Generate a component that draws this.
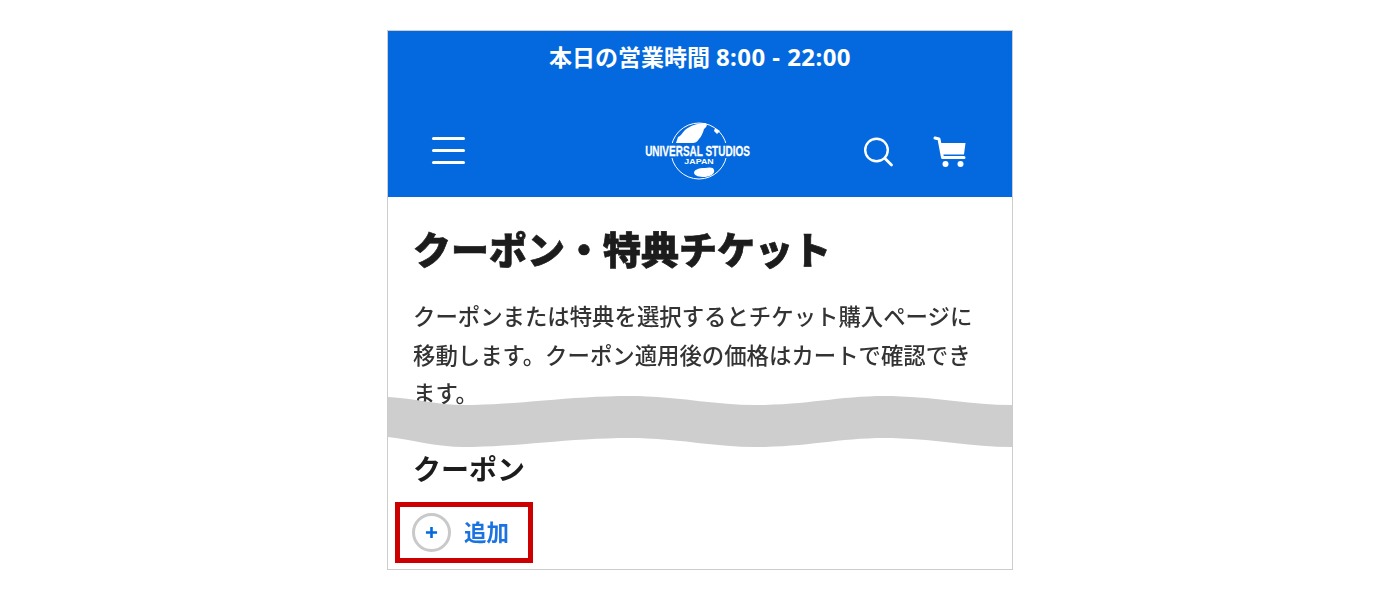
<script>
  const waveTop = "M0 1C25 2 50 9 75 9C130 9 180 0 242 0C290 0 325 9 367 9C420 9 450 0 497 0C545 0 580 9 625 9";
  const waveBottom = "L625 51C580 51 545 42 497 42C450 42 420 51 367 51C325 51 290 42 242 42C180 42 130 51 75 51C50 51 25 44 0 41Z";
</script>

<div class="frame">
  <header class="header">
    <div class="hours">本日の営業時間 <span class="time">8:00 - 22:00</span></div>
    <nav class="nav">
      <button class="menu" aria-label="メニュー"><span></span><span></span><span></span></button>
      <svg class="logo" viewBox="0 0 110 62" aria-label="Universal Studios Japan">
        <circle cx="54" cy="31" r="28" fill="none" stroke="#fff" stroke-width="1"/>
        <path d="M31 23L33 17C36 16 37 13 40 10C45 6 52 3 60 3C63 4 62 7 59 9C58 13 56 17 54 19C52 22 50 23 48 23Z" fill="#fff"/>
        <path d="M70 8L75 11L72 14L69 11Z" fill="#fff"/>
        <path d="M49 53C49 50 53 48 60 48C64 47 69 47 69 50C70 53 67 56 60 57C54 57 50 56 49 53Z" fill="#fff"/>
        <rect x="0" y="23" width="108" height="15" fill="#0469de"/>
        <text class="logo-main" transform="translate(52.5 36) scale(0.69 1)" text-anchor="middle">UNIVERSAL STUDIOS</text>
        <text class="logo-sub" transform="translate(54 43.5) scale(1.36 1)" text-anchor="middle">JAPAN</text>
      </svg>
      <div class="actions">
        <svg class="search" viewBox="0 0 31 33" aria-label="検索">
          <circle cx="12.5" cy="16" r="11.3" fill="none" stroke="#fff" stroke-width="2.4"/>
          <path d="M21 24.5L27.5 31" stroke="#fff" stroke-width="2.8" stroke-linecap="round"/>
        </svg>
        <svg class="cart" viewBox="0 0 34 34" aria-label="カート">
          <path d="M2 4L6 5L9.5 23.5H31" fill="none" stroke="#fff" stroke-width="3" stroke-linecap="round" stroke-linejoin="round"/>
          <path d="M7 9H32.5L31 20.5H9Z" fill="#fff"/>
          <circle cx="12.5" cy="30" r="3" fill="#fff"/>
          <circle cx="27.5" cy="30" r="3" fill="#fff"/>
        </svg>
      </div>
    </nav>
  </header>

  <main class="top">
    <h1>クーポン・特典チケット</h1>
    <p>クーポンまたは特典を選択するとチケット購入ページに移動します。クーポン適用後の価格はカートで確認できます。</p>
  </main>

  <section class="bottom">
    <h2>クーポン</h2>
    <button class="add">
      <span class="plus"><svg viewBox="0 0 14 14"><path d="M7 1V13M1 7H13" stroke="#0469de" stroke-width="2.8"/></svg></span>
      <span class="add-label">追加</span>
    </button>
  </section>

  <svg class="wave" viewBox="0 0 624 52" aria-hidden="true">
    <path d={waveTop + waveBottom} fill="#cecece"/>
  </svg>
  <div class="highlight"></div>
</div>

<style>
  :global(body) {
    margin: 0;
    background: #fff;
  }
  .frame {
    position: relative;
    box-sizing: border-box;
    width: 626px;
    height: 540px;
    margin: 30px 0 0 387px;
    border: 1px solid #ccc;
    font-family: "Noto Sans", "Noto Sans CJK JP", sans-serif;
    color: #222;
    filter: blur(0.5px);
  }
  .header {
    height: 166px;
    background: #0469de;
    color: #fff;
    display: flex;
    flex-direction: column;
  }
  .hours {
    padding-top: 9px;
    padding-bottom: 1px;
    text-align: center;
    font-size: 23px;
    line-height: 33px;
    font-weight: 700;
  }
  .time {
    font-size: 24px;
    letter-spacing: 0.45px;
  }
  .nav {
    flex: 1;
    display: grid;
    grid-template-columns: 1fr auto 1fr;
    align-items: center;
    padding: 29px 45px 0 44px;
  }
  .menu {
    display: flex;
    flex-direction: column;
    gap: 9px;
    width: 33px;
    padding: 0;
    border: 0;
    background: none;
  }
  .menu span {
    height: 3px;
    border-radius: 2px;
    background: #fff;
  }
  .logo {
    width: 110px;
    height: 62px;
    display: block;
  }
  .logo-main {
    font-family: "Liberation Sans", sans-serif;
    font-size: 14.5px;
    font-weight: 700;
    fill: #fff;
    stroke: #fff;
    stroke-width: 0.25px;
  }
  .logo-sub {
    font-family: "Liberation Sans", sans-serif;
    font-size: 6.5px;
    font-weight: 700;
    fill: #fff;
  }
  .actions {
    display: flex;
    justify-content: flex-end;
    align-items: center;
    gap: 38px;
  }
  .search {
    width: 31px;
    height: 33px;
  }
  .cart {
    width: 34px;
    height: 34px;
  }
  .top {
    height: 200px;
    padding: 0 25px;
  }
  h1 {
    margin: 0;
    padding-top: 26px;
    font-size: 38px;
    line-height: 52px;
    font-weight: 900;
    color: #1c1c1c;
    -webkit-text-stroke: 0.7px #1c1c1c;
  }
  p {
    margin: 0;
    padding-top: 23px;
    font-size: 22.4px;
    line-height: 38.5px;
    font-weight: 500;
    color: #333;
  }
  .bottom {
    padding: 52px 25px 0;
  }
  h2 {
    margin: 0;
    font-size: 28px;
    line-height: 40px;
    font-weight: 700;
    color: #1c1c1c;
  }
  .add {
    display: flex;
    align-items: center;
    gap: 13px;
    margin-top: 24px;
    margin-left: -1px;
    padding: 0;
    border: 0;
    background: none;
    font: inherit;
    font-size: 22.5px;
    font-weight: 700;
    color: #1a73e0;
  }
  .add-label {
    padding-bottom: 2px;
  }
  .plus {
    box-sizing: border-box;
    width: 39px;
    height: 39px;
    border: 3px solid #c9c9c9;
    border-radius: 50%;
    display: flex;
    align-items: center;
    justify-content: center;
  }
  .plus svg {
    width: 13px;
    height: 13px;
  }
  .wave {
    position: absolute;
    left: 0;
    top: 365px;
    width: 624px;
    height: 52px;
  }
  .highlight {
    position: absolute;
    left: 7px;
    top: 471px;
    width: 138px;
    height: 61px;
    box-sizing: border-box;
    border: 5px solid #cc0000;
  }
</style>
